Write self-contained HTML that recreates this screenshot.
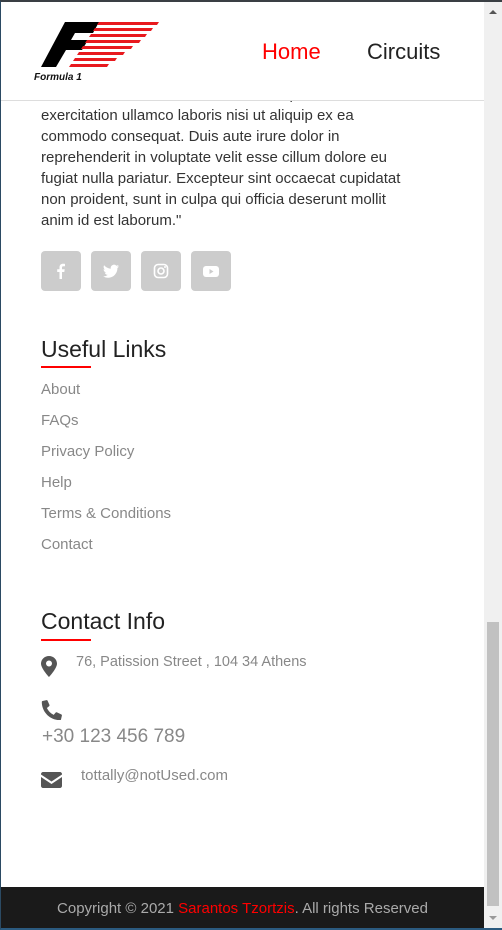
<!DOCTYPE html>
<html><head><style>
*{margin:0;padding:0;box-sizing:border-box}
html,body{width:502px;height:930px;overflow:hidden;background:#fff;font-family:"Liberation Sans",sans-serif}
.frame{position:absolute;left:0;top:0;width:502px;height:930px;border-left:1px solid #2b4a63;border-top:2px solid #3a3f44;border-bottom:2px solid #2b5a7f}
.sb{position:absolute;right:0;top:2px;width:18px;height:926px;background:#f0f0f0}
.thumb{position:absolute;left:3px;width:12px;top:620px;height:284px;background:#c1c1c1}
.content{position:absolute;left:1px;top:2px;width:483px;height:926px;overflow:hidden}
.para{position:absolute;left:40px;top:82px;width:440px;font-size:15px;line-height:21px;color:#333;white-space:nowrap}
.hdr{position:absolute;left:0;top:0;width:483px;height:99px;background:#fff;border-bottom:1px solid #ddd}
.nav{position:absolute;top:37px;font-size:22px}
.soc{position:absolute;top:249px;width:40px;height:40px;background:#ccc;border-radius:4px}
.soc svg{position:absolute;left:12px;top:12px}
h3{position:absolute;left:40px;font-size:23px;font-weight:normal;color:#222}
.ul{position:absolute;left:40px;width:50px;height:2px;background:#f00}
.lnk{position:absolute;left:40px;font-size:15px;color:#888}
.foot{position:absolute;left:0;top:885px;width:483px;height:41px;background:#1a1a1a;color:#aaa;font-size:15px;text-align:center;line-height:44px}
</style></head><body>
<div class="content">
<div class="para">nostrud exercitation ullamco laboris, quis<br>exercitation ullamco laboris nisi ut aliquip ex ea<br>commodo consequat. Duis aute irure dolor in<br>reprehenderit in voluptate velit esse cillum dolore eu<br>fugiat nulla pariatur. Excepteur sint occaecat cupidatat<br>non proident, sunt in culpa qui officia deserunt mollit<br>anim id est laborum."</div>
<div class="hdr">
<svg style="position:absolute;left:32px;top:18px" width="128" height="62">
<polygon points="8,47 32,2 66,2 60,13 42,13 38,20 55,20 49,30 33,30 23,47" fill="#000"/>
<g fill="#e8191e"><polygon points="66,2 126,2 124,5 64,5"/><polygon points="62,8 120,8 118,11 60,11"/><polygon points="58,14 114,14 112,17 56,17"/><polygon points="54,20 108,20 106,23 52,23"/><polygon points="50,26 100,26 98,29 48,29"/><polygon points="46,32 92,32 90,35 44,35"/><polygon points="42,38 84,38 82,41 40,41"/><polygon points="38,44 76,44 74,47 36,47"/></g>
<text x="1" y="60" font-size="10" font-style="italic" font-weight="bold" fill="#111" font-family="Liberation Sans">Formula 1</text>
</svg>
<div class="nav" style="left:261px;color:#f00">Home</div>
<div class="nav" style="left:366px;color:#222">Circuits</div>
</div>
<div class="soc" style="left:40px"><svg width="16" height="16"><path d="M9 16V9h2.3l.4-2.7H9V4.6c0-.8.3-1.3 1.4-1.3H12V.9C11.6.8 10.9.7 10 .7 8 .7 6.5 1.9 6.5 4.2v2.1H4.2V9h2.3v7z" fill="#fff"/></svg></div>
<div class="soc" style="left:90px"><svg width="16" height="16"><path d="M16 3.2c-.6.3-1.2.4-1.9.5.7-.4 1.2-1 1.4-1.8-.6.4-1.3.6-2.1.8A3.3 3.3 0 0 0 7.8 5.7 9.3 9.3 0 0 1 1.1 2.300a3.3 3.3 0 0 0 1 4.4c-.5 0-1-.2-1.5-.4 0 1.6 1.1 2.9 2.6 3.2-.5.1-1 .2-1.5.1.4 1.3 1.600 2.3 3.1 2.3A6.6 6.6 0 0 1 0 13.3 9.3 9.3 0 0 0 5 14.8c6 0 9.4-5 9.4-9.4v-.4c.7-.5 1.2-1.1 1.6-1.8z" fill="#fff"/></svg></div>
<div class="soc" style="left:140px"><svg width="16" height="16"><rect x="1.5" y="1.5" width="13" height="13" rx="3.5" fill="none" stroke="#fff" stroke-width="1.6"/><circle cx="8" cy="8" r="3" fill="none" stroke="#fff" stroke-width="1.6"/><circle cx="12" cy="4" r="1" fill="#fff"/></svg></div>
<div class="soc" style="left:190px"><svg width="16" height="16"><rect x="0" y="3" width="16" height="11" rx="3" fill="#fff"/><polygon points="6.5,6 6.5,11 10.5,8.5" fill="#ccc"/></svg></div>
<h3 style="top:334px">Useful Links</h3><div class="ul" style="top:364px"></div>
<div class="lnk" style="top:379px">About</div>
<div class="lnk" style="top:410px">FAQs</div>
<div class="lnk" style="top:441px">Privacy Policy</div>
<div class="lnk" style="top:472px">Help</div>
<div class="lnk" style="top:503px">Terms &amp; Conditions</div>
<div class="lnk" style="top:534px">Contact</div>
<h3 style="top:606px">Contact Info</h3><div class="ul" style="top:637px"></div>
<svg style="position:absolute;left:40px;top:654px" width="16" height="22"><path d="M8 0C3.6 0 0 3.4 0 7.6 0 12.5 8 21 8 21s8-8.5 8-13.4C16 3.4 12.4 0 8 0zm0 10.5a3 3 0 1 1 0-6 3 3 0 0 1 0 6z" fill="#555"/></svg>
<div class="lnk" style="left:75px;top:652px;font-size:14.5px">76, Patission Street , 104 34 Athens</div>
<svg style="position:absolute;left:40px;top:697px" width="21" height="21"><path d="M20 15.2l-4.3-1.9c-.4-.2-.9 0-1.1.3l-1.9 2.3A14.4 14.4 0 0 1 5.9 9l2.3-1.9c.3-.3.4-.7.3-1.1L6.6 1.7C6.4 1.2 5.9 1 5.5 1.1l-4 .9C1.1 2.1.8 2.5.8 2.9.8 13.1 9 21.2 19.1 21.2c.4 0 .8-.3.9-.7l.9-4c.1-.5-.1-1-.9-1.3z" fill="#555"/></svg>
<div class="lnk" style="left:41px;top:724px;font-size:19px">+30 123 456 789</div>
<svg style="position:absolute;left:40px;top:770px" width="21" height="16"><path d="M0 2c0-1 1-2 2-2h17c1 0 2 1 2 2v.5l-10.5 7L0 2.5zM0 5l10.5 7L21 5v9c0 1-1 2-2 2H2c-1 0-2-1-2-2z" fill="#555"/></svg>
<div class="lnk" style="left:80px;top:765px;font-size:15px">tottally@notUsed.com</div>
<div class="foot">Copyright © 2021 <span style="color:#f00">Sarantos Tzortzis</span>. All rights Reserved</div>
</div>
<div class="sb"><div style="position:absolute;left:5px;top:8px;border:4px solid transparent;border-bottom:4px solid #555;border-top:0;width:0"></div><div class="thumb"></div><div style="position:absolute;left:5px;bottom:8px;border:4px solid transparent;border-top:4px solid #999;border-bottom:0;width:0"></div></div>
<div class="frame"></div>
</body></html>
